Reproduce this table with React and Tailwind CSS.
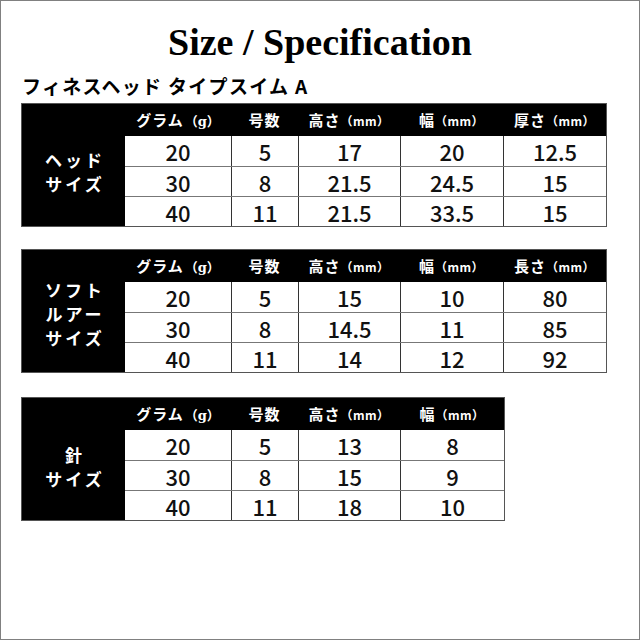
const jp = { fontFamily: '"Noto Sans CJK JP", "Noto Sans", sans-serif' };

const headsCols = [
  { label: "グラム", unit: "g", w: 106 },
  { label: "号数", w: 67 },
  { label: "高さ", unit: "mm", w: 102 },
  { label: "幅", unit: "mm", w: 103 },
];

const tables = [
  {
    name: ["ヘッド", "サイズ"],
    pad: "pt-[14px]",
    cols: [...headsCols, { label: "厚さ", unit: "mm", w: 103 }],
    rows: [
      ["20", "5", "17", "20", "12.5"],
      ["30", "8", "21.5", "24.5", "15"],
      ["40", "11", "21.5", "33.5", "15"],
    ],
  },
  {
    name: ["ソフト", "ルアー", "サイズ"],
    pad: "pt-[6px]",
    cols: [...headsCols, { label: "長さ", unit: "mm", w: 103 }],
    rows: [
      ["20", "5", "15", "10", "80"],
      ["30", "8", "14.5", "11", "85"],
      ["40", "11", "14", "12", "92"],
    ],
  },
  {
    name: ["針", "サイズ"],
    pad: "pt-[16px]",
    cols: [...headsCols.slice(0, 3), { label: "幅", unit: "mm", w: 104 }],
    rows: [
      ["20", "5", "13", "8"],
      ["30", "8", "15", "9"],
      ["40", "11", "18", "10"],
    ],
  },
];

// header label; "g" is set in a serif, "mm" smaller
function HeadLabel({ label, unit }) {
  return (
    <span className="inline-flex items-baseline justify-center">
      <span className="text-[15px] font-bold tracking-[1px]">{label}</span>
      {unit === "g" && (
        <span className="text-[13px] font-bold ml-[1px]">
          （
          <span style={{ fontFamily: '"DejaVu Serif", serif' }}>g</span>
          ）
        </span>
      )}
      {unit === "mm" && (
        <span className="text-[12px] font-bold tracking-[0.5px]">（mm）</span>
      )}
    </span>
  );
}

function SpecTable({ name, pad, cols, rows }) {
  return (
    <div className="flex border border-[#555] bg-black" style={jp}>
      {/* left label block */}
      <div
        className={`w-[103px] flex flex-col items-center justify-center ${pad} text-white text-[17px] font-bold leading-[24px] tracking-[3px]`}
      >
        {name.map((n) => (
          <div key={n} className="pl-[3px]">{n}</div>
        ))}
      </div>
      <div className="flex flex-col">
        <div className="flex h-[32px] items-center text-white">
          {cols.map((c, i) => (
            <div key={i} className="flex justify-center" style={{ width: c.w }}>
              <HeadLabel label={c.label} unit={c.unit} />
            </div>
          ))}
        </div>
        {rows.map((r, ri) => (
          <div
            key={ri}
            className={`flex h-[30px] bg-white ${ri > 0 ? "border-t border-[#777]" : ""}`}
          >
            {r.map((v, ci) => (
              <div
                key={ci}
                className={`flex items-center justify-center text-[22px] font-medium text-[#111] leading-none ${ci > 0 ? "border-l border-[#333]" : ""}`}
                style={{ width: cols[ci].w }}
              >
                {v}
              </div>
            ))}
          </div>
        ))}
      </div>
    </div>
  );
}

export default function App() {
  return (
    <div className="w-[640px] h-[640px] border border-[#808080] bg-white flex flex-col items-start px-[20px]">
      <h1
        className="self-center mt-[20px] text-[38px] font-bold leading-[42px] text-black"
        style={{ fontFamily: '"Liberation Serif", serif' }}
      >
        Size / Specification
      </h1>
      <div
        className="mt-[11px] ml-[1px] text-[19px] font-bold leading-[24px] tracking-[1.3px] text-black"
        style={jp}
      >
        フィネスヘッド タイプスイム A
      </div>
      <div className="mt-[5px] flex flex-col gap-[22px]">
        {tables.map((t, i) => (
          <div key={i} className={i === 2 ? "mt-[2px] self-start" : "self-start"}>
            <SpecTable {...t} />
          </div>
        ))}
      </div>
    </div>
  );
}
